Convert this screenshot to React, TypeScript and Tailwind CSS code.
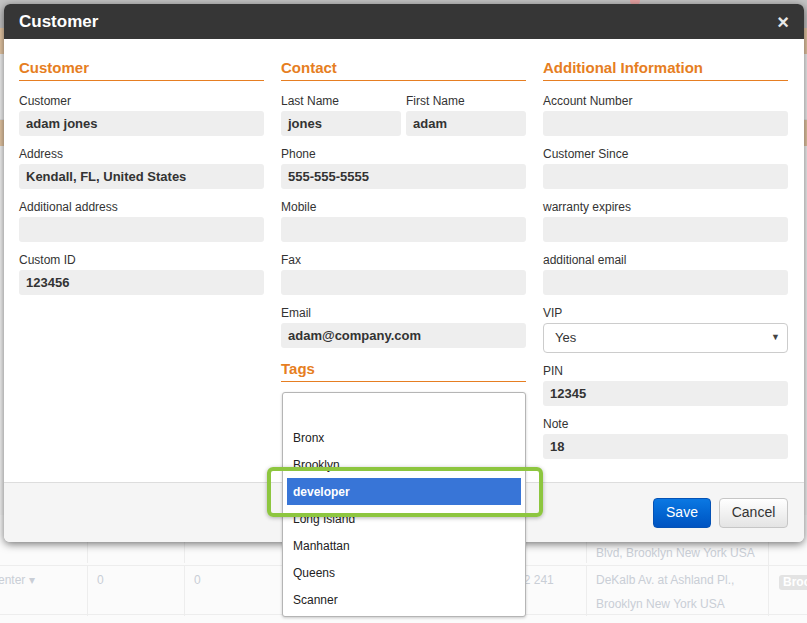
import React from 'react';

const font = { fontFamily: '"Liberation Sans", Arial, sans-serif' };

type Field = { label: string; value?: string };

const customerFields: Field[] = [
  { label: 'Customer', value: 'adam jones' },
  { label: 'Address', value: 'Kendall, FL, United States' },
  { label: 'Additional address' },
  { label: 'Custom ID', value: '123456' },
];

const contactFields: Field[] = [
  { label: 'Phone', value: '555-555-5555' },
  { label: 'Mobile' },
  { label: 'Fax' },
  { label: 'Email', value: 'adam@company.com' },
];

const infoFields: Field[] = [
  { label: 'Account Number' },
  { label: 'Customer Since' },
  { label: 'warranty expires' },
  { label: 'additional email' },
];

const tags = ['', 'Bronx', 'Brooklyn', 'developer', 'Long Island', 'Manhattan', 'Queens', 'Scanner'];

const SectionTitle = ({ children, className = '' }: { children: React.ReactNode; className?: string }) => (
  <h3 className={`text-[15px] leading-[20px] font-bold text-[#e67e22] border-b border-[#e67e22] ${className}`}>
    {children}
  </h3>
);

const Input = ({ label, value }: Field) => (
  <div>
    <div className="text-[12px] leading-[14px] text-[#333] pt-[1px] pb-[3px]">{label}</div>
    <div className="h-[25px] rounded-[3px] bg-[#eeeeee] px-[7px] flex items-center text-[13px] font-bold text-[#333]">
      {value}
    </div>
  </div>
);

const BackgroundPage = () => (
  <div className="absolute inset-0 bg-[#fbfbfb] flex flex-col text-[12px] text-[#c9ced6]">
    <div className="h-[28px] bg-[#c4c4c4] shrink-0" />
    <div className="h-[487px] shrink-0 flex flex-col">
      <div className="h-[26px] bg-[#e8c9a6]" />
      <div className="h-[66px] bg-[#f3f3f3] border-b border-[#e6e6e6]" />
      <div className="h-[26px] bg-[#e8c9a6]" />
      <div className="flex-1 bg-[#f6f6f6]" />
    </div>
    {/* table rows behind the dialog */}
    <div className="grid grid-cols-[88px_97px_195px_104px_103px_182px_38px] shrink-0 border-b border-[#ededed]">
      {Array.from({ length: 5 }).map((_, i) => (
        <div key={i} className="h-[48px] border-r border-[#ededed]" />
      ))}
      <div className="pl-[9px] pt-[2px] leading-[24px] border-r border-[#ededed] whitespace-nowrap">
        <div>Flatbush Av. and Atlantic</div>
        <div>Blvd, Brooklyn New York USA</div>
      </div>
      <div />
    </div>
    <div className="grid grid-cols-[88px_97px_195px_104px_103px_182px_38px] shrink-0 border-b border-[#ededed] h-[49px]">
      <div className="pt-[2px] leading-[24px] border-r border-[#ededed] whitespace-nowrap overflow-hidden flex justify-start">
        <span className="-ml-[2px]">enter &#9662;</span>
      </div>
      <div className="pl-[9px] pt-[2px] leading-[24px] border-r border-[#ededed]">0</div>
      <div className="pl-[9px] pt-[2px] leading-[24px] border-r border-[#ededed]">0</div>
      <div className="border-r border-[#ededed]" />
      <div className="pl-[3px] pt-[2px] leading-[24px] border-r border-[#ededed] whitespace-nowrap">212 552 241</div>
      <div className="pl-[9px] pt-[2px] leading-[24px] border-r border-[#ededed] whitespace-nowrap">
        <div>DeKalb Av. at Ashland Pl.,</div>
        <div>Brooklyn New York USA</div>
      </div>
      <div className="pl-[10px] pt-[7px] overflow-hidden">
        <span className="inline-block bg-[#e3e3e3] text-white font-bold rounded-[3px] px-[4px] leading-[15px] text-[12px]">
          Brooklyn
        </span>
      </div>
    </div>
    <div className="flex-1" />
  </div>
);

export default function App() {
  return (
    <div className="relative w-[807px] h-[623px] overflow-hidden" style={font}>
      <BackgroundPage />
      <span className="absolute left-[630px] top-[-4px] w-[10px] h-[10px] rounded-full bg-[#e8a3a3]" />

      {/* dialog */}
      <div className="absolute left-[4px] top-[4px] w-[800px] h-[538px] rounded-[6px] bg-white shadow-[0_2px_8px_rgba(0,0,0,0.55)] flex flex-col overflow-hidden">
        <div className="h-[35px] bg-[#363636] flex items-center justify-between pl-[15px] pr-[15px] shrink-0">
          <h2 className="text-white font-bold text-[17px]">Customer</h2>
          <span className="text-[#e8e8e8] font-bold text-[20px] leading-none">×</span>
        </div>

        <div className="flex-1 grid grid-cols-3 gap-x-[17px] pl-[15px] pr-[16px] pt-[19px]">
          <div>
            <SectionTitle className="pb-[2px]">Customer</SectionTitle>
            <div className="flex flex-col gap-[10px] mt-[12px]">
              {customerFields.map((f) => (
                <Input key={f.label} {...f} />
              ))}
            </div>
          </div>

          <div>
            <SectionTitle className="pb-[2px]">Contact</SectionTitle>
            <div className="flex flex-col gap-[10px] mt-[12px]">
              <div className="grid grid-cols-2 gap-[5px]">
                <Input label="Last Name" value="jones" />
                <Input label="First Name" value="adam" />
              </div>
              {contactFields.map((f) => (
                <Input key={f.label} {...f} />
              ))}
            </div>
            <SectionTitle className="mt-[11px] pb-[2px]">Tags</SectionTitle>
          </div>

          <div>
            <SectionTitle className="pb-[2px]">Additional Information</SectionTitle>
            <div className="flex flex-col gap-[10px] mt-[12px]">
              {infoFields.map((f) => (
                <Input key={f.label} {...f} />
              ))}
              <div>
                <div className="text-[12px] leading-[14px] text-[#333] pt-[1px] pb-[3px]">VIP</div>
                <div className="h-[30px] rounded-[4px] border border-[#cccccc] bg-white pl-[11px] pr-[7px] flex items-center justify-between text-[13px] text-[#333]">
                  <span>Yes</span>
                  <span className="text-[9px] text-[#444]">▼</span>
                </div>
              </div>
              <Input label="PIN" value="12345" />
              <Input label="Note" value="18" />
            </div>
          </div>
        </div>

        <div className="h-[60px] shrink-0 border-t border-[#dddddd] bg-[#f5f5f5] flex items-center justify-end gap-[8px] pr-[16px]">
          <button className="h-[30px] w-[58px] rounded-[4px] border border-[#0552b5] bg-gradient-to-b from-[#0b78e3] to-[#0053c1] text-white text-[14px]">
            Save
          </button>
          <button className="h-[30px] w-[69px] rounded-[4px] border border-[#c6c6c6] bg-gradient-to-b from-white to-[#e4e4e4] text-[#333] text-[14px]">
            Cancel
          </button>
        </div>
      </div>

      {/* open tags list */}
      <div className="absolute left-[282px] top-[392px] w-[244px] h-[225px] bg-white border border-[#b5b5b5] rounded-[3px] shadow-[0_1px_3px_rgba(0,0,0,0.2)] pt-[4px] px-[4px]">
        {tags.map((t) => (
          <div
            key={t || 'blank'}
            className={`h-[27px] px-[6px] flex items-center text-[12px] ${
              t === 'developer' ? 'bg-[#3875d7] text-white font-bold' : 'text-[#222]'
            }`}
          >
            {t}
          </div>
        ))}
      </div>

      {/* highlight around the selected tag */}
      <div className="absolute left-[267px] top-[467px] w-[276px] h-[50px] rounded-[6px] border-[4px] border-[#8dc63f] shadow-[0_1px_4px_rgba(0,0,0,0.3)]" />
    </div>
  );
}
